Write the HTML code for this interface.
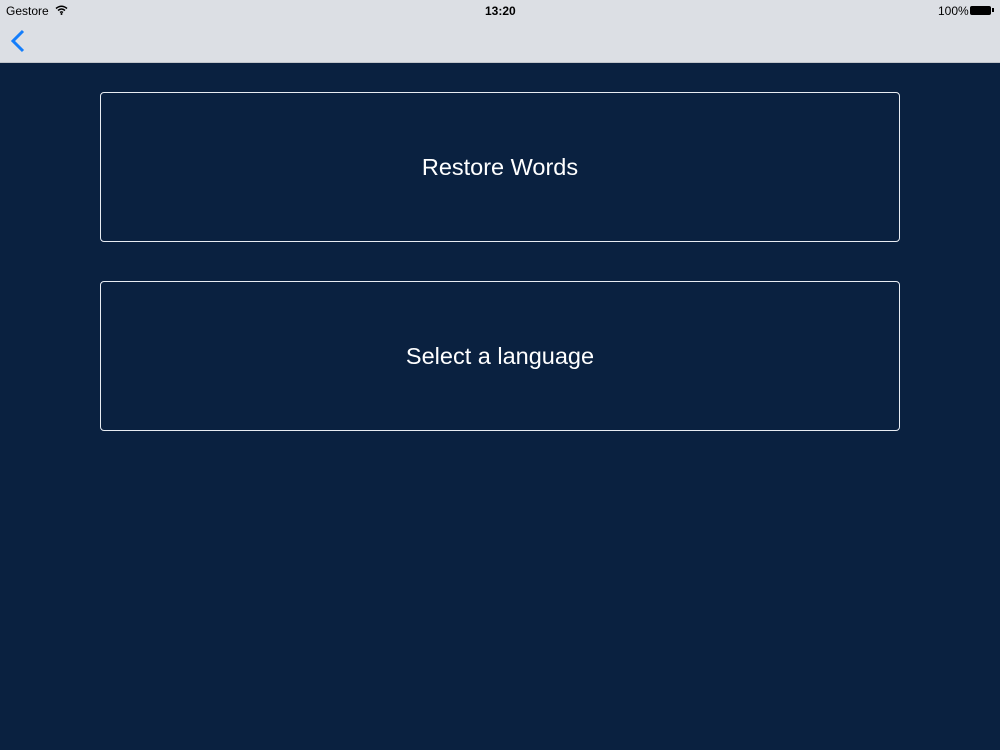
<!DOCTYPE html>
<html><head><style>
body{margin:0;width:1000px;height:750px;background:#0a2140;font-family:"Liberation Sans",sans-serif;overflow:hidden;position:relative}
.bar{position:absolute;left:0;top:0;width:1000px;height:62px;background:#dcdfe4;border-bottom:1px solid #c0c4ca}
.t{position:absolute;font-size:12px;color:#000;top:4px}
.btn{position:absolute;left:100px;width:798px;height:148px;border:1px solid #e8ecf2;border-radius:4px;color:#fff;font-size:23.5px;display:flex;align-items:center;justify-content:center}
</style></head><body>
<div class="bar">
<div class="t" style="left:6px">Gestore</div>
<svg style="position:absolute;left:55px;top:5px" width="13" height="10" viewBox="0 0 13 10"><path d="M1 3.5Q6.5-1 12 3.5M3 5.5Q6.5 2.5 10 5.5M5 7.5Q6.5 6.3 8 7.5" stroke="#000" stroke-width="1.5" fill="none"/><circle cx="6.5" cy="9" r="1" fill="#000"/></svg>
<div class="t" style="left:485px;font-weight:bold">13:20</div>
<div class="t" style="left:938px">100%</div>
<div style="position:absolute;left:970px;top:6px;width:21px;height:9px;background:#000;border-radius:2px"></div>
<div style="position:absolute;left:992px;top:8px;width:2px;height:4px;background:#000"></div>
<svg style="position:absolute;left:10px;top:29px" width="16" height="24" viewBox="0 0 16 24"><path d="M13 2L3 12L13 22" stroke="#147efb" stroke-width="3" fill="none"/></svg>
</div>
<div class="btn" style="top:92px">Restore Words</div>
<div class="btn" style="top:281px">Select a language</div>
</body></html>
